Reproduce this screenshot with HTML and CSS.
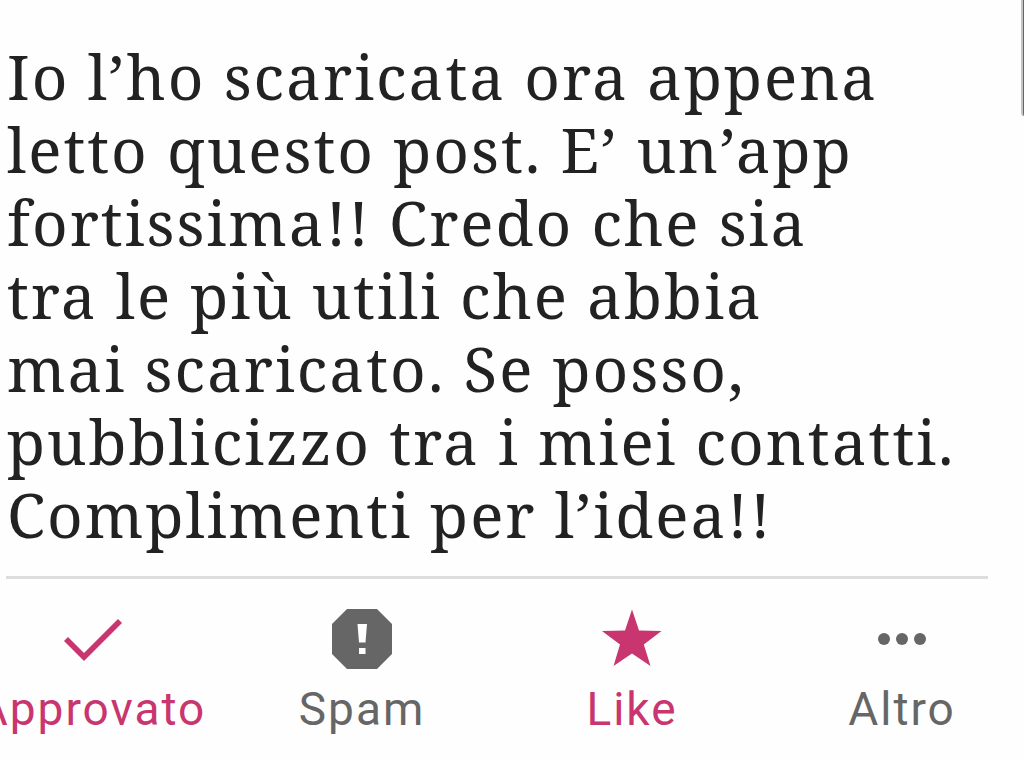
FILE: index.html
```html
<!DOCTYPE html>
<html lang="it">
<head>
<meta charset="utf-8">
<meta name="viewport" content="width=device-width, initial-scale=1">
<title>Commento</title>
<link rel="stylesheet" href="styles.css">
</head>
<body>
<main class="comment">
<p class="comment-text">Io l’ho scaricata ora appena<br>letto questo post. E’ un’app<br>fortissima!! Credo che sia<br>tra le più utili che abbia<br>mai scaricato. Se posso,<br>pubblicizzo tra i miei contatti.<br>Complimenti per l’idea!!</p>
<hr class="divider">
<div class="actions">
<button class="action active" type="button"><svg class="icon" viewBox="0 0 72 72" aria-hidden="true"><path d="M28 50L12 34L8 38L28 58L66 20L62 16Z" fill="currentColor"/></svg><span>Approvato</span></button>
<button class="action" type="button"><svg class="icon" viewBox="0 0 72 72" aria-hidden="true"><path d="M21 6H51L66 21V51L51 66H21L6 51V21Z" fill="currentColor"/><path d="M31.500 21H41L39.500 39.500H33Z M33 45H39.500V51H33Z" fill="#fff"/></svg><span>Spam</span></button>
<button class="action active" type="button"><svg class="icon" viewBox="0 0 72 72" aria-hidden="true"><path d="M36 6.500L43 27.500L65.500 28L47.800 41.500L54.500 63L36 50.500L17.500 63L24 41.500L6 28L29 27.500Z" fill="currentColor"/></svg><span>Like</span></button>
<button class="action" type="button"><svg class="icon" viewBox="0 0 72 72" aria-hidden="true"><g fill="currentColor"><circle cx="18" cy="36" r="6"/><circle cx="36" cy="36" r="6"/><circle cx="54" cy="36" r="6"/></g></svg><span>Altro</span></button>
</div>
</main>
<div class="scrollbar" aria-hidden="true"></div>
</body>
</html>
```
FILE: styles.css
```css
body {
  margin: 0;
  background: #fefefe;
  overflow-x: hidden;
}
.comment {
  padding: 40px 36px 0 6px;
}
.comment-text {
  margin: 0;
  padding-left: 1px;
  color: #222;
  font: 62px/73px "Noto Serif", "Droid Serif", "DejaVu Serif", serif;
  letter-spacing: 2px;
  white-space: nowrap;
}
.divider {
  height: 3px;
  margin: 25px 0 24px;
  border: 0;
  background: #ddd;
}
.actions {
  display: grid;
  grid-template-columns: repeat(4, 1fr);
  margin: 0 -49px;
}
.action {
  display: flex;
  flex-direction: column;
  align-items: center;
  padding: 0;
  border: 0;
  background: none;
  color: #666;
  font: 46px/54px Roboto, sans-serif;
  letter-spacing: 2px;
}
.active {
  color: #c9356e;
}
.icon {
  width: 72px;
  height: 72px;
  margin-bottom: 7px;
}
.scrollbar {
  position: absolute;
  top: 0;
  right: 0;
  width: 1px;
  height: 116px;
  border-left: 2px solid #c4c4c4;
  border-bottom-left-radius: 3px;
  background: #666;
}
```
